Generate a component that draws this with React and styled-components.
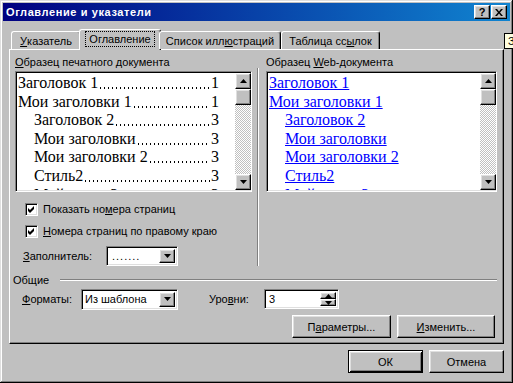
import React from 'react';
import styled, { createGlobalStyle, css } from 'styled-components';

const GlobalStyle = createGlobalStyle`
  html, body {
    margin: 0;
    padding: 0;
    background: #c0c0c0;
    overflow: hidden;
  }
  body {
    font-family: "Liberation Sans", Arial, sans-serif;
    font-size: 11px;
    color: #000;
  }
`;

// classic 3d edges
const raised = css`
  border: 1px solid;
  border-color: #fff #000 #000 #fff;
  box-shadow: inset -1px -1px #808080, inset 1px 1px #dfdfdf;
  background: #c0c0c0;
`;

const sunken = css`
  border: 1px solid;
  border-color: #808080 #fff #fff #808080;
  box-shadow: inset 1px 1px #000, inset -1px -1px #dfdfdf;
  background: #fff;
`;

const Window = styled.div`
  position: relative;
  width: 513px;
  height: 383px;
  box-sizing: border-box;
  padding: 3px;
  background: #c0c0c0;
  box-shadow: inset -1px -1px #000, inset 1px 1px #dfdfdf,
    inset -2px -2px #808080, inset 2px 2px #fff;
  display: flex;
  flex-direction: column;
  overflow: hidden;
`;

const TitleBar = styled.div`
  height: 18px;
  padding: 0 3px 0 3px;
  display: flex;
  align-items: center;
  justify-content: space-between;
  background: linear-gradient(90deg, #000080, #1084d0);
`;

const TitleText = styled.span`
  color: #fff;
  font-weight: bold;
  font-size: 11px;
  letter-spacing: 0.6px;
`;

const TitleButtons = styled.div`
  display: flex;
  gap: 1px;
`;

const TitleButton = styled.div`
  ${raised};
  width: 16px;
  height: 14px;
  box-sizing: border-box;
  display: flex;
  align-items: center;
  justify-content: center;
  font-weight: bold;
  font-size: 11px;
  line-height: 1;
`;

const Body = styled.div`
  padding: 8px 6px 0 6px;
  display: flex;
  flex-direction: column;
`;

const TabRow = styled.div`
  display: flex;
  align-items: flex-end;
  height: 20px;
  padding-left: 2px;
  position: relative;
  z-index: 1;
`;

const Tab = styled.div`
  box-sizing: border-box;
  width: ${p => (p.$active ? p.$w + 4 : p.$w)}px;
  height: ${p => (p.$active ? 21 : 18)}px;
  margin: ${p => (p.$active ? '0 -2px -1px' : '0')};
  border-top: 1px solid #fff;
  border-left: 1px solid #fff;
  border-right: 1px solid #000;
  border-radius: 3px 3px 0 0;
  box-shadow: inset -1px 0 #808080;
  background: #c0c0c0;
  display: flex;
  align-items: center;
  justify-content: center;
  padding-bottom: ${p => (p.$active ? 2 : 0)}px;
  white-space: nowrap;
`;

const Focus = styled.span`
  outline: 1px dotted #000;
  outline-offset: 1px;
  padding: 0 2px;
`;

const Key = styled.span`
  text-decoration: underline;
`;

const Panel = styled.div`
  height: 295px;
  box-sizing: border-box;
  border: 1px solid;
  border-color: #fff #000 #000 #fff;
  box-shadow: inset -1px -1px #808080;
  padding: 6px 6px 0 5px;
  display: flex;
  flex-direction: column;
`;

const Top = styled.div`
  display: flex;
`;

const Column = styled.div`
  display: flex;
  flex-direction: column;
  width: ${p => (p.$w ? `${p.$w}px` : 'auto')};
  flex: ${p => (p.$w ? 'none' : 1)};
  min-width: 0;
`;

const Divider = styled.div`
  width: 0;
  border-left: 1px solid #808080;
  border-right: 1px solid #fff;
  margin: 12px 7px 0 5px;
`;

const Label = styled.div`
  height: 15px;
  line-height: 13px;
  white-space: nowrap;
`;

const Preview = styled.div`
  ${sunken};
  height: 121px;
  box-sizing: border-box;
  display: flex;
  padding: 1px 0 1px 1px;
`;

const PreviewList = styled.div`
  flex: 1;
  min-width: 0;
  overflow: hidden;
  padding-top: 1px;
  font-family: "Liberation Serif", "Times New Roman", serif;
  font-size: 16px;
  line-height: 18.6px;
`;

const Entry = styled.div`
  display: flex;
  white-space: nowrap;
  padding-left: ${p => 1 + p.$level * 16}px;
  padding-right: 16px;
`;

// dot leader between heading and page number
const Leader = styled.span`
  flex: 1;
  min-width: 0;
  margin: 0 1px 0 2px;
  background-image: linear-gradient(90deg, #000 1px, transparent 1px);
  background-size: 4px 2px;
  background-repeat: repeat-x;
  background-position: 0 13px;
`;

const WebLink = styled.div`
  padding-left: ${p => 1 + p.$level * 16}px;
  white-space: nowrap;
  span {
    color: #0000ff;
    text-decoration: underline;
  }
`;

const ScrollBar = styled.div`
  width: 16px;
  display: flex;
  flex-direction: column;
  flex: none;
`;

const ScrollButton = styled.div`
  ${raised};
  width: 16px;
  height: 16px;
  box-sizing: border-box;
  display: flex;
  align-items: center;
  justify-content: center;
  flex: none;
`;

const Track = styled.div`
  flex: 1;
  background-image: repeating-conic-gradient(#fff 0 25%, #c0c0c0 0 50%);
  background-size: 2px 2px;
`;

const CheckRow = styled.div`
  display: flex;
  align-items: center;
  gap: 5px;
  height: 22px;
  padding-left: 10px;
  margin-top: ${p => p.$mt || 0}px;
  white-space: nowrap;
`;

const CheckBox = styled.div`
  ${sunken};
  width: 13px;
  height: 13px;
  box-sizing: border-box;
  display: flex;
  align-items: center;
  justify-content: center;
`;

const FieldRow = styled.div`
  display: flex;
  align-items: center;
  height: 20px;
  padding-left: ${p => p.$pl || 0}px;
  margin-top: ${p => p.$mt || 0}px;
`;

const FieldLabel = styled.span`
  width: ${p => p.$w}px;
  margin-left: ${p => p.$ml || 0}px;
  white-space: nowrap;
  flex: none;
`;

const Combo = styled.div`
  ${sunken};
  width: ${p => p.$w}px;
  height: ${p => p.$h || 20}px;
  box-sizing: border-box;
  display: flex;
  align-items: stretch;
  padding: 2px;
`;

const ComboText = styled.div`
  flex: 1;
  display: flex;
  align-items: center;
  padding-left: ${p => p.$pl || 1}px;
  white-space: nowrap;
  letter-spacing: ${p => p.$ls || 0}px;
`;

const DropButton = styled.div`
  ${raised};
  width: 16px;
  box-sizing: border-box;
  display: flex;
  align-items: center;
  justify-content: center;
`;

const SpinButtons = styled.div`
  display: flex;
  flex-direction: column;
  width: 16px;
`;

const SpinButton = styled.div`
  ${raised};
  flex: 1;
  box-sizing: border-box;
  display: flex;
  align-items: center;
  justify-content: center;
`;

const GroupHeader = styled.div`
  display: flex;
  align-items: center;
  height: 13px;
  margin: 7px 0 0 -2px;
`;

const GroupLine = styled.div`
  flex: 1;
  border-top: 1px solid #808080;
  border-bottom: 1px solid #fff;
  margin-left: 11px;
`;

const ButtonRow = styled.div`
  display: flex;
  justify-content: flex-end;
  gap: 6px;
  margin-top: ${p => p.$mt || 0}px;
  padding-right: ${p => p.$pr || 0}px;
`;

const Button = styled.div`
  ${raised};
  width: ${p => p.$w}px;
  height: 23px;
  box-sizing: border-box;
  display: flex;
  align-items: center;
  justify-content: center;
  white-space: nowrap;
  ${p =>
    p.$default &&
    css`
      border-color: #000;
      box-shadow: inset 1px 1px #fff, inset -1px -1px #000,
        inset 2px 2px #dfdfdf, inset -2px -2px #808080;
    `}
`;

const Tooltip = styled.div`
  position: absolute;
  left: 504px;
  top: 33px;
  width: 9px;
  height: 16px;
  box-sizing: border-box;
  padding-left: 3px;
  border: 1px solid #000;
  border-right: none;
  background: #ffffe1;
  line-height: 14px;
  overflow: hidden;
`;

const Arrow = ({ up }) => (
  <svg width="7" height="4" viewBox="0 0 7 4">
    <polygon points={up ? '0,4 3.5,0 7,4' : '0,0 7,0 3.5,4'} fill="#000" />
  </svg>
);

const Check = () => (
  <svg width="7" height="7" viewBox="0 0 7 7">
    <polygon points="0,2 2,4 6,0 6,3 2,7 0,5" fill="#000" />
  </svg>
);

const printEntries = [
  { level: 0, text: 'Заголовок 1', page: 1 },
  { level: 0, text: 'Мои заголовки 1', page: 1 },
  { level: 1, text: 'Заголовок 2', page: 3 },
  { level: 1, text: 'Мои заголовки', page: 3 },
  { level: 1, text: 'Мои заголовки 2', page: 3 },
  { level: 1, text: 'Стиль2', page: 3 },
  { level: 1, text: 'Мой стиль 3', page: 3 },
];

function ScrollBox() {
  return (
    <ScrollBar>
      <ScrollButton><Arrow up /></ScrollButton>
      <ScrollButton />
      <Track />
      <ScrollButton><Arrow /></ScrollButton>
    </ScrollBar>
  );
}

function App() {
  return (
    <>
      <GlobalStyle />
      <Window>
        <TitleBar>
          <TitleText>Оглавление и указатели</TitleText>
          <TitleButtons>
            <TitleButton>?</TitleButton>
            <TitleButton>
              <svg width="8" height="7" viewBox="0 0 8 7">
                <path d="M0 0h2l2 2.5L6 0h2L5 3.5 8 7H6L4 4.5 2 7H0l3-3.5z" fill="#000" />
              </svg>
            </TitleButton>
          </TitleButtons>
        </TitleBar>

        <Body>
          <TabRow>
            <Tab $w={70}><Key>У</Key>казатель</Tab>
            <Tab $w={78} $active><Focus>Оглавление</Focus></Tab>
            <Tab $w={122}>Список илл<Key>ю</Key>страций</Tab>
            <Tab $w={99}>Таблица сс<Key>ы</Key>лок</Tab>
          </TabRow>

          <Panel>
            <Top>
              <Column $w={237}>
                <Label><Key>О</Key>бразец печатного документа</Label>
                <Preview>
                  <PreviewList>
                    {printEntries.map(e => (
                      <Entry key={e.text} $level={e.level}>
                        <span>{e.text}</span>
                        <Leader />
                        <span>{e.page}</span>
                      </Entry>
                    ))}
                  </PreviewList>
                  <ScrollBox />
                </Preview>

                <CheckRow $mt={6}>
                  <CheckBox><Check /></CheckBox>
                  <span>Показать но<Key>м</Key>ера страниц</span>
                </CheckRow>
                <CheckRow>
                  <CheckBox><Check /></CheckBox>
                  <span><Key>Н</Key>омера страниц по правому краю</span>
                </CheckRow>
                <FieldRow $pl={8} $mt={4}>
                  <FieldLabel $w={83}><Key>З</Key>аполнитель:</FieldLabel>
                  <Combo $w={72}>
                    <ComboText $pl={3} $ls={1}>.......</ComboText>
                    <DropButton><Arrow /></DropButton>
                  </Combo>
                </FieldRow>
              </Column>

              <Divider />

              <Column>
                <Label>Образец <Key>W</Key>eb-документа</Label>
                <Preview>
                  <PreviewList>
                    {printEntries.map(e => (
                      <WebLink key={e.text} $level={e.level}>
                        <span>{e.text}</span>
                      </WebLink>
                    ))}
                  </PreviewList>
                  <ScrollBox />
                </Preview>
              </Column>
            </Top>

            <GroupHeader>
              <span>Общие</span>
              <GroupLine />
            </GroupHeader>

            <FieldRow $pl={7} $mt={3}>
              <FieldLabel $w={59}><Key>Ф</Key>орматы:</FieldLabel>
              <Combo $w={97} $h={21}>
                <ComboText>Из шаблона</ComboText>
                <DropButton><Arrow /></DropButton>
              </Combo>
              <FieldLabel $w={55} $ml={31}>Уро<Key>в</Key>ни:</FieldLabel>
              <Combo $w={75}>
                <ComboText $pl={2}>3</ComboText>
                <SpinButtons>
                  <SpinButton><Arrow up /></SpinButton>
                  <SpinButton><Arrow /></SpinButton>
                </SpinButtons>
              </Combo>
            </FieldRow>

            <ButtonRow $mt={6} $pr={2}>
              <Button $w={99}>П<Key>а</Key>раметры...</Button>
              <Button $w={98}><Key>И</Key>зменить...</Button>
            </ButtonRow>
          </Panel>

          <ButtonRow $mt={6}>
            <Button $w={75} $default>ОК</Button>
            <Button $w={75}>Отмена</Button>
          </ButtonRow>
        </Body>

        <Tooltip>З</Tooltip>
      </Window>
    </>
  );
}

export default App;
